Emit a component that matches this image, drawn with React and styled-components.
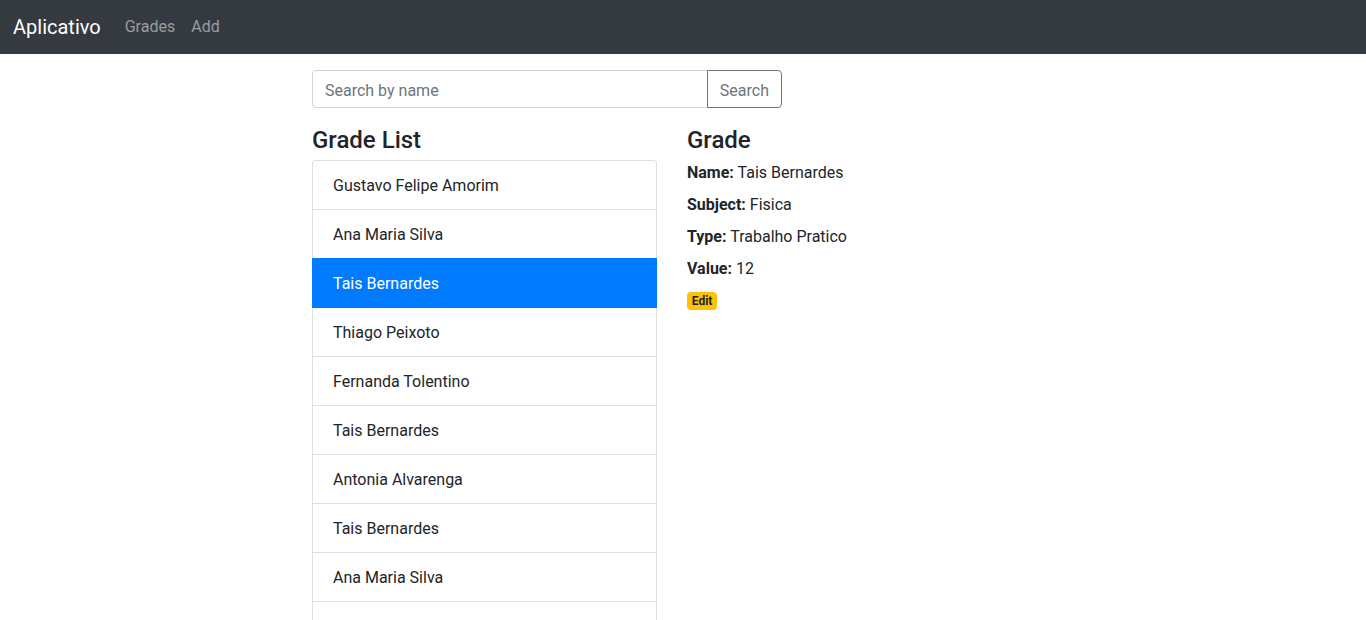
import React from "react";
import styled, { createGlobalStyle } from "styled-components";

const GlobalStyle = createGlobalStyle`
  *, *::before, *::after { box-sizing: border-box; }
  html, body { margin: 0; padding: 0; }
  body {
    font-family: Roboto, "Noto Sans", sans-serif;
    font-size: 16px;
    line-height: 1.5;
    color: #212529;
    background: #fff;
  }
`;

const Navbar = styled.nav`
  display: flex;
  align-items: center;
  height: 54px;
  padding: 0 13px;
  background: #343a40;
`;

const Brand = styled.a`
  font-size: 20px;
  line-height: 30px;
  color: #fff;
  text-decoration: none;
  margin-right: 16px;
`;

const NavList = styled.div`
  display: flex;
`;

const NavLink = styled.a`
  display: block;
  padding: 8px 8px;
  color: rgba(255, 255, 255, 0.5);
  text-decoration: none;
`;

const Container = styled.div`
  margin-top: 16px;
  padding-right: 22px;
`;

const ListRow = styled.div`
  display: flex;
  flex-wrap: wrap;
  max-width: 750px;
  margin: 0 auto;
`;

const Col = styled.div`
  flex: 0 0 ${(p) => p.$w};
  max-width: ${(p) => p.$w};
  padding: 0 15px;
`;

const InputGroup = styled.div`
  display: flex;
  margin-bottom: 16px;
`;

const SearchInput = styled.input`
  flex: 1 1 auto;
  min-width: 0;
  height: 38px;
  padding: 7px 12px 5px;
  font: inherit;
  color: #495057;
  border: 1px solid #ced4da;
  border-radius: 4px 0 0 4px;
  outline: none;
  &::placeholder { color: #6c757d; opacity: 1; }
`;

const OutlineButton = styled.button`
  height: 38px;
  padding: 8px 12px 4px;
  font: inherit;
  color: #6c757d;
  background: transparent;
  border: 1px solid #6c757d;
  border-radius: 0 4px 4px 0;
  margin-left: -1px;
`;

const Heading = styled.h4`
  margin: 0 0 6px;
  padding-top: 2px;
  font-size: 24px;
  font-weight: 500;
  line-height: 28px;
`;

const ListGroup = styled.ul`
  margin: 0;
  padding: 0;
  list-style: none;
`;

const ListItem = styled.li`
  padding: 13px 20px 11px;
  border: 1px solid rgba(0, 0, 0, 0.125);
  margin-bottom: -1px;
  background: ${(p) => (p.$active ? "#007bff" : "#fff")};
  color: ${(p) => (p.$active ? "#fff" : "#212529")};
  ${(p) => p.$active && "border-color: #007bff; position: relative; z-index: 2;"}
  &:first-child { border-top-left-radius: 4px; border-top-right-radius: 4px; }
`;

const Field = styled.div`
  padding-top: 1px;
`;

const Label = styled.label`
  display: inline-block;
  margin-bottom: 7px;
  font-weight: 700;
`;

const Badge = styled.a`
  display: inline-block;
  margin-top: 1px;
  padding: 3px 4.8px;
  font-size: 12px;
  font-weight: 700;
  line-height: 1;
  color: #212529;
  background: #ffc107;
  border-radius: 4px;
  text-decoration: none;
  vertical-align: baseline;
`;

const names = [
  "Gustavo Felipe Amorim",
  "Ana Maria Silva",
  "Tais Bernardes",
  "Thiago Peixoto",
  "Fernanda Tolentino",
  "Tais Bernardes",
  "Antonia Alvarenga",
  "Tais Bernardes",
  "Ana Maria Silva",
  "Thiago Peixoto",
  "Fernanda Tolentino",
];

export default function App() {
  return (
    <>
      <GlobalStyle />
      <Navbar>
        <Brand href="#">Aplicativo</Brand>
        <NavList>
          <NavLink href="#">Grades</NavLink>
          <NavLink href="#">Add</NavLink>
        </NavList>
      </Navbar>
      <Container>
        <ListRow>
          <Col $w="66.6667%">
            <InputGroup>
              <SearchInput placeholder="Search by name" />
              <OutlineButton>Search</OutlineButton>
            </InputGroup>
          </Col>
          <Col $w="50%">
            <Heading>Grade List</Heading>
            <ListGroup>
              {names.map((n, i) => (
                <ListItem key={i} $active={i === 2}>
                  {n}
                </ListItem>
              ))}
            </ListGroup>
          </Col>
          <Col $w="50%">
            <Heading>Grade</Heading>
            <Field>
              <Label>Name:</Label> Tais Bernardes
            </Field>
            <Field>
              <Label>Subject:</Label> Fisica
            </Field>
            <Field>
              <Label>Type:</Label> Trabalho Pratico
            </Field>
            <Field>
              <Label>Value:</Label> 12
            </Field>
            <Badge href="#">Edit</Badge>
          </Col>
        </ListRow>
      </Container>
    </>
  );
}
